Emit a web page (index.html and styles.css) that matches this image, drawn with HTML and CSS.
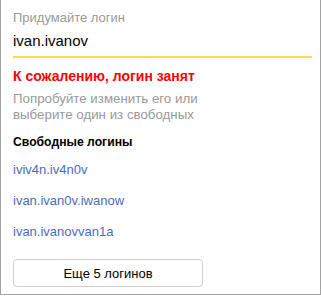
FILE: index.html
```html
<html>

<head>
    <link rel="stylesheet" href="styles.css">
</head>

<body>
    <div class="login__panel">
        <div class="field">
            <label class="field__label" for="login">Придумайте логин</label>
            <input class="field__input" id="login" type="text" value="ivan.ivanov">
        </div>
        <p class="error">К сожалению, логин занят</p>
        <p class="hint">Попробуйте изменить его или<br>выберите один из свободных</p>
        <h3 class="suggest__title">Свободные логины</h3>
        <ul class="suggest__list">
            <li><a href="#">iviv4n.iv4n0v</a></li>
            <li><a href="#">ivan.ivan0v.iwanow</a></li>
            <li><a href="#">ivan.ivanovvan1a</a></li>
        </ul>
        <button class="more__button">Еще 5 логинов</button>
    </div>
</body>

</html>
```

FILE: styles.css
```css
body {
    margin: 0;
    padding: 0;
    background-color: #fff;
    font-family: "Liberation Sans", Arial, sans-serif;
    color: #000;
}

div.login__panel {
    box-sizing: border-box;
    width: 321px;
    height: 295px;
    padding: 10px 8px 0 12px;
    border: 1px solid #a3a3a3;
    border-top: none;
    display: flex;
    flex-flow: column nowrap;
    align-items: flex-start;
}

div.field {
    display: flex;
    flex-flow: column nowrap;
    width: 100%;
}

label.field__label {
    font-size: 13px;
    line-height: 16px;
    color: #999;
}

input.field__input {
    margin: 6px 0 0 0;
    padding: 0 0 6px 0;
    border: none;
    border-bottom: 2px solid #ffdb4d;
    outline: none;
    font-family: "Liberation Sans", Arial, sans-serif;
    font-size: 15px;
    line-height: 18px;
    color: #000;
    width: 100%;
}

p.error {
    margin: 10px 0 0 0;
    font-size: 14px;
    line-height: 16px;
    font-weight: 700;
    color: #f00;
}

p.hint {
    margin: 7px 0 0 0;
    font-size: 13.3px;
    line-height: 16px;
    color: #999;
}

h3.suggest__title {
    margin: 11px 0 0 0;
    font-size: 12.2px;
    line-height: 16px;
    font-weight: 700;
}

ul.suggest__list {
    margin: 12px 0 0 0;
    padding: 0;
    list-style: none;
    display: flex;
    flex-flow: column nowrap;
    gap: 15px;
}

ul.suggest__list li {
    font-size: 13px;
    line-height: 16px;
}

ul.suggest__list a {
    color: #4a6cc0;
    text-decoration: none;
}

button.more__button {
    margin: 19px 0 0 0;
    width: 190px;
    height: 28px;
    background-color: #fff;
    border: 1px solid #cfcfcf;
    border-radius: 4px;
    font-family: "Liberation Sans", Arial, sans-serif;
    font-size: 13px;
    color: #000;
}
```
